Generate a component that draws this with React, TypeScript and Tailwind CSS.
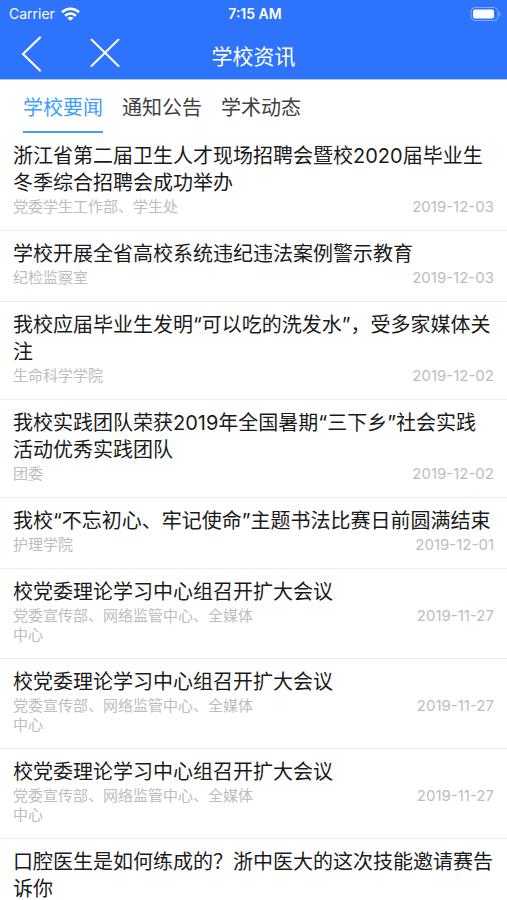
type NewsItem = { title: string; source: string; date: string };

const tabs = ['学校要闻', '通知公告', '学术动态'];

const news: NewsItem[] = [
  { title: '浙江省第二届卫生人才现场招聘会暨校2020届毕业生冬季综合招聘会成功举办', source: '党委学生工作部、学生处', date: '2019-12-03' },
  { title: '学校开展全省高校系统违纪违法案例警示教育', source: '纪检监察室', date: '2019-12-03' },
  { title: '我校应届毕业生发明“可以吃的洗发水”，受多家媒体关注', source: '生命科学学院', date: '2019-12-02' },
  { title: '我校实践团队荣获2019年全国暑期“三下乡”社会实践活动优秀实践团队', source: '团委', date: '2019-12-02' },
  { title: '我校“不忘初心、牢记使命”主题书法比赛日前圆满结束', source: '护理学院', date: '2019-12-01' },
  { title: '校党委理论学习中心组召开扩大会议', source: '党委宣传部、网络监管中心、全媒体中心', date: '2019-11-27' },
  { title: '校党委理论学习中心组召开扩大会议', source: '党委宣传部、网络监管中心、全媒体中心', date: '2019-11-27' },
  { title: '校党委理论学习中心组召开扩大会议', source: '党委宣传部、网络监管中心、全媒体中心', date: '2019-11-27' },
  { title: '口腔医生是如何练成的？浙中医大的这次技能邀请赛告诉你', source: '', date: '' },
];

function StatusBar() {
  return (
    <div className="grid h-7 grid-cols-3 items-center pr-[6px] pl-[9px] text-[14px] leading-5">
      <div className="flex items-center gap-[6px]">
        <span>Carrier</span>
        <svg width="19" height="14" viewBox="0 0 19 14" fill="none" stroke="currentColor" strokeWidth="2.6" aria-hidden="true">
          <path d="M1 5.2C5.8.6 13.2.6 18 5.2" />
          <path d="M4.1 8.7C7.2 5.8 11.8 5.8 14.9 8.7" />
          <path d="M9.5 13.8 6.4 10.9C8.2 9.3 10.800 9.300 12.600 10.900Z" fill="currentColor" stroke="none" />
        </svg>
      </div>
      <span className="text-center font-semibold">7:15 AM</span>
      <svg className="justify-self-end" width="31" height="14" viewBox="0 0 31 14" aria-hidden="true">
        <rect x="1" y="0.5" width="27" height="13" rx="4" fill="none" stroke="#fff" strokeOpacity="0.4" />
        <rect x="3" y="2.5" width="21" height="9" rx="2" fill="#fff" />
        <path d="M29.200 4.800C30.900 5.500 30.900 8.500 29.200 9.200Z" fill="#fff" fillOpacity="0.5" />
      </svg>
    </div>
  );
}

function NavBar() {
  return (
    <div className="grid h-[51px] grid-cols-[1fr_auto_1fr] items-center">
      <div className="flex items-center gap-12 pl-5">
        <button type="button" aria-label="返回" className="block">
          <svg width="22" height="38" viewBox="0 0 22 38" fill="none" stroke="currentColor" strokeWidth="2.2" strokeLinecap="round">
            <path d="M20 2.500 3 19 20 35.500" />
          </svg>
        </button>
        <button type="button" aria-label="关闭" className="block">
          <svg width="30" height="30" viewBox="0 0 30 30" fill="none" stroke="currentColor" strokeWidth="2" strokeLinecap="round">
            <path d="M1.500 0.500 28.500 27M28.500 0.500 1.500 27" />
          </svg>
        </button>
      </div>
      <h1 className="pt-[6px] text-[21px] leading-7">学校资讯</h1>
    </div>
  );
}

export default function App() {
  return (
    <div className="min-h-screen bg-white font-['Inter','Noto_Sans_CJK_SC',sans-serif] text-[#1a1a1a]">
      <header className="border-b border-[#a9cbff] bg-[#2d73fb] text-white">
        <StatusBar />
        <NavBar />
      </header>
      <nav className="flex h-[53px] gap-[19px] px-[23px]">
        {tabs.map((tab, i) => (
          <button
            key={tab}
            type="button"
            className={
              i === 0
                ? 'border-b-2 border-[#409eff] pt-1 text-[20px] leading-7 text-[#409eff]'
                : 'border-b-2 border-transparent pt-1 text-[20px] leading-7 text-[#404040]'
            }
          >
            {tab}
          </button>
        ))}
      </nav>
      <main>
        {news.map((item, i) => (
          <article key={i} className="border-b border-[#ededed] px-[13px] pt-[10px] pb-[14px]">
            <h2 className="text-[20px] leading-[27px]">{item.title}</h2>
            <div className="flex justify-between text-[15px] leading-[19px] text-[#bdbdbd]">
              <span className="w-1/2">{item.source}</span>
              <time>{item.date}</time>
            </div>
          </article>
        ))}
      </main>
    </div>
  );
}
